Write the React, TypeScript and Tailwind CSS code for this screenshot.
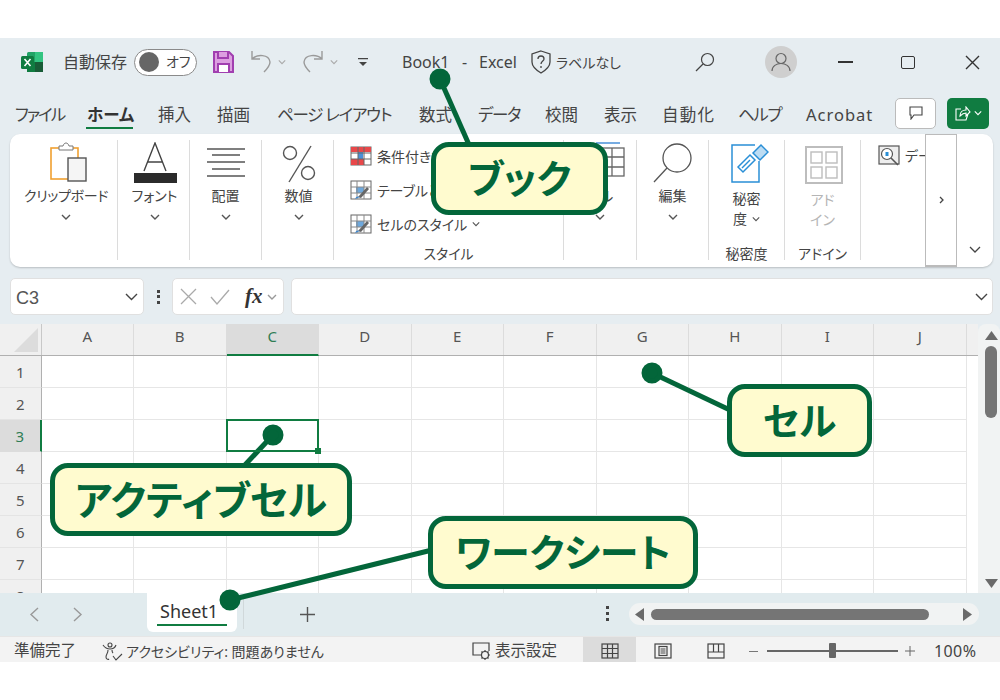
import React from 'react';

const COLS = ['A', 'B', 'C', 'D', 'E', 'F', 'G', 'H', 'I', 'J'];
const ROWS = [1, 2, 3, 4, 5, 6, 7, 8];

const TABS = [
  { label: 'ファイル', w: 'w-[72px] tracking-[-2px]' },
  { label: 'ホーム', w: 'w-[71px]', active: true },
  { label: '挿入', w: 'w-[59px]' },
  { label: '描画', w: 'w-[60px]' },
  { label: 'ページ レイアウト', w: 'w-[142px] tracking-[-1.2px]' },
  { label: '数式', w: 'w-[59px]' },
  { label: 'データ', w: 'w-[67px] tracking-[-1.3px]' },
  { label: '校閲', w: 'w-[59px]' },
  { label: '表示', w: 'w-[58px]' },
  { label: '自動化', w: 'w-[76px] tracking-[1.2px]' },
  { label: 'ヘルプ', w: 'w-[68px] tracking-[-1.3px]' },
  { label: 'Acrobat', w: 'w-[74px] tracking-[1px]' },
];

const Chevron = ({ className = '', color = '#555' }: { className?: string; color?: string }) => (
  <svg className={className} width="10" height="6" viewBox="0 0 10 6" fill="none" stroke={color} strokeWidth="1.4">
    <path d="M1 1l4 4 4-4" />
  </svg>
);

const Group = ({ className, label, children }: { className: string; label?: string; children: React.ReactNode }) => (
  <div className={`relative flex flex-col items-center h-[120px] mt-[6px] border-r border-[#dcdcdc] shrink-0 ${className}`}>
    {children}
    {label && <div className="absolute bottom-[-4px] left-0 right-0 text-center text-[14px] leading-[20px]">{label}</div>}
  </div>
);

const StyleIcon = () => (
  <svg width="22" height="20" viewBox="0 0 22 20" fill="none">
    <rect x="1" y="1" width="20" height="18" fill="#fff" stroke="#666" />
    <rect x="6" y="7" width="8" height="6" fill="#6ea8dc" />
    <path d="M1 7h20M1 13h20M7 1v18M14 1v18" stroke="#888" />
    <path d="M8 17l9-10 2 2-8 9z" fill="#666" />
    <path d="M5 19c1-3 3-3 5-2z" fill="#3a86d0" />
  </svg>
);

const Callout = ({ className, children }: { className: string; children: React.ReactNode }) => (
  <div className={`absolute h-[73px] flex items-center justify-center rounded-[18px] border-[5px] border-[#03663a] bg-[#fffbcf] text-[#03663a] font-bold whitespace-nowrap ${className}`}>
    {children}
  </div>
);

export default function App() {
  return (
    <div className="relative w-[1000px] h-[700px] bg-white overflow-hidden pt-[38px] text-[#444] font-['Noto_Sans','Noto_Sans_CJK_JP',sans-serif] [font-feature-settings:'palt']">
      <div className="h-[624px] flex flex-col bg-[#e6edf1]">
        {/* title bar */}
        <div className="h-[54px] pb-[6px] flex items-center shrink-0 text-[16px]">
          <svg className="ml-[21px]" width="22" height="22" viewBox="0 0 22 22">
            <rect x="6" y="1" width="16" height="20" rx="1.5" fill="#21a366" />
            <rect x="14" y="1" width="8" height="10" fill="#33c481" />
            <rect x="6" y="11" width="8" height="10" fill="#107c41" />
            <rect x="14" y="11" width="8" height="10" fill="#185c37" />
            <rect x="0" y="5" width="13" height="13" rx="1.5" fill="#107c41" />
            <path d="M3.5 8l6 7M9.5 8l-6 7" stroke="#fff" strokeWidth="1.6" />
          </svg>
          <span className="ml-[20px] w-[63px] whitespace-nowrap">自動保存</span>
          <div className="ml-[8px] w-[63px] h-[27px] rounded-full border border-[#8a8a8a] bg-white flex items-center">
            <div className="ml-[4px] w-[20px] h-[20px] rounded-full bg-[#666]" />
            <span className="ml-[7px] text-[14px] leading-none">オフ</span>
          </div>
          <svg className="ml-[16px]" width="21" height="22" viewBox="0 0 21 22" fill="#dc9fe0" stroke="#a13fb0" strokeWidth="2">
            <path d="M1 1h15l4 4v16H1z" />
            <path d="M5 1v6h10V1" />
            <path d="M5 21v-8h11v8" fill="#fff" />
          </svg>
          <svg className="ml-[16px]" width="22" height="24" viewBox="0 0 22 24" fill="none" stroke="#9a9a9a" strokeWidth="1.4">
            <path d="M2 1v8h8M2 9c5-5 17-5 18 3 0 4-3 7-6 10" />
          </svg>
          <Chevron className="ml-[6px] w-[8px]" color="#aaa" />
          <svg className="ml-[16px]" width="22" height="24" viewBox="0 0 22 24" fill="none" stroke="#9a9a9a" strokeWidth="1.4">
            <path d="M20 1v8h-8M20 9c-5-5-17-5-18 3 0 4 3 7 6 10" />
          </svg>
          <Chevron className="ml-[6px] w-[8px]" color="#aaa" />
          <svg className="ml-[20px]" width="10" height="10" viewBox="0 0 10 10" fill="#444">
            <path d="M0 1h10v1.3H0zM1 5h8L5 9z" />
          </svg>
          <span className="ml-[34px] w-[60px]">Book1</span>
          <span className="w-[17px]">-</span>
          <span className="w-[51px]">Excel</span>
          <svg width="22" height="24" viewBox="0 0 22 24" fill="none" stroke="#444" strokeWidth="1.3">
            <path d="M11 1l9 3v8c0 5-4 8-9 11-5-3-9-6-9-11V4z" />
            <path d="M8 9c0-4 6-4 6 0 0 2-3 2-3 5M11 16v2" />
          </svg>
          <span className="ml-[4px] w-[139px] text-[14px] whitespace-nowrap">ラベルなし</span>
          <svg width="20" height="20" viewBox="0 0 20 20" fill="none" stroke="#444" strokeWidth="1.2">
            <circle cx="12.5" cy="7.5" r="6" />
            <path d="M8 12l-7 7" />
          </svg>
          <div className="ml-[50px] w-[32px] h-[32px] rounded-full bg-[#cfcfcf] flex items-center justify-center">
            <svg width="20" height="20" viewBox="0 0 20 20" fill="none" stroke="#666" strokeWidth="1.2">
              <circle cx="10" cy="6.5" r="5" />
              <path d="M1 19c0-10 18-10 18 0" />
            </svg>
          </div>
          <div className="ml-[41px] w-[15px] h-[1.5px] bg-[#333]" />
          <div className="ml-[48px] w-[14px] h-[13px] rounded-[2px] border-[1.5px] border-[#333]" />
          <svg className="ml-[50px]" width="15" height="15" viewBox="0 0 15 15" stroke="#333" strokeWidth="1.4">
            <path d="M1 1l13 13M14 1L1 14" />
          </svg>
        </div>

        {/* ribbon tabs */}
        <div className="h-[42px] pt-[4px] flex items-center shrink-0 pl-[15px] text-[16.5px] relative">
          {TABS.map((t) => (
            <div key={t.label} className={`${t.w} shrink-0 whitespace-nowrap relative ${t.active ? 'font-bold text-[#333]' : ''}`}>
              {t.label}
              {t.active && <div className="absolute left-[-1px] top-[24px] w-[47px] h-[2.5px] bg-[#107c41]" />}
            </div>
          ))}
          <div className="ml-[15px] mb-[4px] w-[41px] h-[31px] rounded-[5px] border border-[#bbb] bg-white flex items-center justify-center shrink-0">
            <svg width="14" height="14" viewBox="0 0 14 14" fill="none" stroke="#444" strokeWidth="1.1">
              <path d="M1 1h12v8H5l-3 4V9H1z" />
            </svg>
          </div>
          <div className="ml-[11px] mb-[4px] w-[42px] h-[31px] rounded-[5px] bg-[#107c41] flex items-center justify-center gap-[3px] shrink-0">
            <svg width="16" height="15" viewBox="0 0 16 15" fill="none" stroke="#fff" strokeWidth="1.1">
              <path d="M6 3H1v11h10l2-6M5 10c0-4 3-6 6-6V1l4 5-4 4V7c-3 0-4 1-6 3z" />
            </svg>
            <Chevron className="w-[8px]" color="#fff" />
          </div>
        </div>

        {/* ribbon */}
        <div className="ml-[10px] w-[983px] h-[133px] shrink-0 flex bg-white rounded-[10px] shadow-[0_1px_2px_rgba(0,0,0,0.2)] text-[14px] relative overflow-hidden">
          <Group className="w-[108px] pl-[5px]">
            <svg className="mt-[2px] ml-[6px]" width="38" height="42" viewBox="0 0 38 42" fill="none">
              <rect x="1" y="6" width="27" height="31" fill="#fff" stroke="#f0a030" strokeWidth="1.6" />
              <path d="M9 8V4h4c1-4 5-4 6 0h4v4z" fill="#fff" stroke="#777" />
              <rect x="18" y="16" width="18" height="23" fill="#f5f5f5" stroke="#555" strokeWidth="1.4" />
            </svg>
            <span className="mt-[2px] leading-[20px] whitespace-nowrap tracking-[-0.3px]">クリップボード</span>
            <Chevron className="mt-[8px]" />
          </Group>
          <Group className="w-[72px] pl-[2px]">
            <svg className="mt-[2px]" width="44" height="42" viewBox="0 0 44 42" fill="none">
              <path d="M11 29L22 1l11 28M15 20h14" stroke="#444" strokeWidth="1.4" />
              <rect x="1" y="31" width="43" height="10" fill="#2b2b2b" />
            </svg>
            <span className="mt-[2px] leading-[20px]">フォント</span>
            <Chevron className="mt-[8px]" />
          </Group>
          <Group className="w-[72px]">
            <svg className="mt-[2px]" width="38" height="42" viewBox="0 0 38 42" stroke="#555" strokeWidth="1.3">
              <path d="M0 7h38M5 13h28M0 20h38M5 27h28M0 34h38" />
            </svg>
            <span className="mt-[2px] leading-[20px]">配置</span>
            <Chevron className="mt-[8px]" />
          </Group>
          <Group className="w-[72px] pl-[2px]">
            <svg className="mt-[2px]" width="34" height="42" viewBox="0 0 34 42" fill="none" stroke="#555" strokeWidth="1.4">
              <ellipse cx="8" cy="11" rx="6.5" ry="6.5" />
              <ellipse cx="26" cy="31" rx="6.5" ry="6.5" />
              <path d="M29 4L7 40" />
            </svg>
            <span className="mt-[2px] leading-[20px]">数値</span>
            <Chevron className="mt-[8px]" />
          </Group>
          <Group className="w-[230px] items-start pl-[16px]" label="スタイル">
            <div className="mt-[-1px] h-[34px] flex items-center gap-[5px] whitespace-nowrap">
              <svg width="22" height="20" viewBox="0 0 22 20" fill="none">
                <rect x="1" y="1" width="20" height="18" fill="#fff" stroke="#666" />
                <rect x="1" y="1" width="20" height="5" fill="#e8484a" />
                <rect x="8" y="6" width="5" height="7" fill="#4a90d9" />
                <rect x="1" y="13" width="13" height="6" fill="#e8484a" />
                <path d="M1 7h20M1 13h20M8 1v18M14 1v18" stroke="#666" />
              </svg>
              <span>条件付き書式</span>
            </div>
            <div className="h-[34px] flex items-center gap-[5px] whitespace-nowrap">
              <StyleIcon />
              <span>テーブルとして書式設定</span>
            </div>
            <div className="h-[34px] flex items-center gap-[5px] whitespace-nowrap">
              <StyleIcon />
              <span>セルのスタイル</span>
              <Chevron className="w-[8px]" />
            </div>
          </Group>
          <Group className="w-[73px]">
            <svg className="mt-[2px] ml-[24px]" width="32" height="36" viewBox="0 0 32 36" fill="none" stroke="#666" strokeWidth="1.3">
              <rect x="4" y="6" width="24" height="28" />
              <path d="M4 15h24M4 25h24M16 6v28" />
              <path d="M0 1h24" stroke="#4a90d9" />
            </svg>
            <span className="mt-[8px] leading-[20px]">セル</span>
            <Chevron className="mt-[8px]" />
          </Group>
          <Group className="w-[72px]">
            <svg className="mt-[3px]" width="40" height="40" viewBox="0 0 40 40" fill="none" stroke="#555" strokeWidth="1.3">
              <circle cx="24" cy="15" r="14" />
              <path d="M14 25L1 39" />
            </svg>
            <span className="mt-[3px] leading-[20px]">編集</span>
            <Chevron className="mt-[8px]" />
          </Group>
          <Group className="w-[76px]" label="秘密度">
            <svg className="mt-[3px] ml-[7px]" width="38" height="40" viewBox="0 0 38 40" fill="none" stroke="#2a8fd6" strokeWidth="1.5">
              <path d="M24 2H1v37h27V18" />
              <path d="M7 24l12-12 5 5-12 12z" />
              <path d="M11 25l8-8" />
              <path d="M22 10l8-8 7 7-8 8z" fill="#bcdcf3" />
            </svg>
            <span className="mt-[6px] leading-[20px]">秘密</span>
            <span className="leading-[20px] flex items-center gap-[5px]">度<Chevron className="w-[8px]" /></span>
          </Group>
          <Group className="w-[76px] text-[#b5b5b5]" label="">
            <svg className="mt-[6px] ml-[3px]" width="38" height="38" viewBox="0 0 38 38" fill="none" stroke="#bdbdbd" strokeWidth="2">
              <rect x="1" y="1" width="36" height="36" />
              <rect x="6" y="6" width="11" height="11" strokeWidth="1.4" />
              <rect x="21" y="6" width="11" height="11" strokeWidth="1.4" />
              <rect x="6" y="21" width="11" height="11" strokeWidth="1.4" />
              <rect x="21" y="21" width="11" height="11" strokeWidth="1.4" />
            </svg>
            <span className="mt-[6px] leading-[20px]">アド</span>
            <span className="leading-[20px]">イン</span>
            <div className="absolute bottom-[-4px] left-0 right-0 text-center leading-[20px] text-[#444]">アドイン</div>
          </Group>
          <div className="w-[64px] shrink-0 overflow-hidden pl-[17px] pt-[11px] flex items-start gap-[5px] whitespace-nowrap">
            <svg className="shrink-0" width="22" height="21" viewBox="0 0 22 21" fill="none" stroke="#555" strokeWidth="1.2">
              <rect x="1" y="1" width="20" height="18" fill="#eee" />
              <circle cx="9" cy="9" r="5.5" fill="#fff" />
              <rect x="7.5" y="7" width="3" height="4" fill="#2a8fd6" stroke="none" />
              <path d="M13 13l7 7" strokeWidth="1.6" />
            </svg>
            <span>データ分析</span>
          </div>
          <div className="w-[32px] shrink-0 border-x border-t border-b-2 border-[#bbb] flex items-center justify-center bg-white text-[13px]">
            <svg width="5" height="8" viewBox="0 0 5 8" fill="none" stroke="#444" strokeWidth="1.3">
              <path d="M1 1l3 3-3 3" />
            </svg>
          </div>
          <div className="flex-1 flex items-end justify-center pb-[14px]">
            <svg width="12" height="7" viewBox="0 0 12 7" fill="none" stroke="#444" strokeWidth="1.3">
              <path d="M1 1l5 5 5-5" />
            </svg>
          </div>
        </div>

        {/* formula bar */}
        <div className="mt-[11px] h-[37px] shrink-0 flex items-center">
          <div className="ml-[10px] w-[134px] h-full rounded-[5px] bg-white border border-[#e0e0e0] flex items-center justify-between pl-[5px] pr-[5px] text-[18px] text-[#555]">
            <span className="font-['Liberation_Sans',sans-serif] mt-[3px]">C3</span>
            <svg width="13" height="8" viewBox="0 0 13 8" fill="none" stroke="#444" strokeWidth="1.4">
              <path d="M1 1l5.500 5.500L12 1" />
            </svg>
          </div>
          <div className="w-[28px] flex flex-col items-center gap-[2.5px]">
            <div className="w-[3px] h-[3px] bg-[#444]" />
            <div className="w-[3px] h-[3px] bg-[#444]" />
            <div className="w-[3px] h-[3px] bg-[#444]" />
          </div>
          <div className="w-[112px] h-full rounded-[5px] bg-white border border-[#e0e0e0] flex items-center">
            <svg className="ml-[7px]" width="17" height="17" viewBox="0 0 17 17" stroke="#aaa" strokeWidth="1.3">
              <path d="M1 1l15 15M16 1L1 16" />
            </svg>
            <svg className="ml-[13px]" width="20" height="16" viewBox="0 0 20 16" fill="none" stroke="#aaa" strokeWidth="1.3">
              <path d="M1 8l6 7L19 1" />
            </svg>
            <span className="ml-[15px] w-[19px] text-[21px] leading-none font-bold italic text-[#333] font-['Liberation_Serif',serif]">fx</span>
            <Chevron className="ml-[2px] w-[12px]" color="#999" />
          </div>
          <div className="ml-[7px] w-[702px] h-full rounded-[5px] bg-white border border-[#e0e0e0] flex items-center justify-end pr-[4px]">
            <svg width="13" height="8" viewBox="0 0 13 8" fill="none" stroke="#444" strokeWidth="1.4">
              <path d="M1 1l5.500 5.500L12 1" />
            </svg>
          </div>
        </div>

        {/* sheet */}
        <div className="mt-[9px] flex-1 min-h-0 flex">
          <div className="w-[978px] shrink-0 bg-white overflow-hidden">
            <div className="h-[32px] flex bg-[#f0f0f0] border-b-[1.5px] border-[#b0b0b0] text-[15px] text-[#555]">
              <div className="w-[41.5px] shrink-0 border-r border-[#c8c8c8] flex items-end justify-end pb-[3px] pr-[3px]">
                <svg width="24" height="24" viewBox="0 0 24 24" fill="#dcdcdc">
                  <path d="M24 0v24H0z" />
                </svg>
              </div>
              {COLS.map((c) => (
                <div
                  key={c}
                  className={`w-[92.5px] shrink-0 border-r border-[#dcdcdc] flex items-center justify-center pb-[6px] ${c === 'C' ? 'bg-[#dcdcdc] text-[#2f7d55] border-b-2 border-b-[#107c41] h-[32px]' : ''}`}
                >
                  {c}
                </div>
              ))}
            </div>
            {ROWS.map((r) => (
              <div key={r} className="h-[32px] flex text-[15px]">
                <div className={`w-[41.5px] shrink-0 flex items-center justify-center pt-[2px] border-r border-b ${r === 3 ? 'bg-[#dcdcdc] text-[#2f7d55] border-r-[#107c41] border-r-2 border-b-[#dcdcdc]' : 'bg-[#f0f0f0] text-[#555] border-r-[#b0b0b0] border-b-[#e4e4e4]'}`}>
                  {r}
                </div>
                {COLS.map((c) => (
                  <div key={c} className="relative w-[92.5px] shrink-0 border-r border-b border-[#e6e6e6]">
                    {r === 3 && c === 'C' && (
                      <div className="absolute z-10 left-[-1px] top-[-1px] right-[-1px] bottom-[-1px] border-2 border-[#107c41]">
                        <div className="absolute right-[-4px] bottom-[-4px] w-[6px] h-[6px] bg-[#107c41]" />
                      </div>
                    )}
                  </div>
                ))}
              </div>
            ))}
          </div>
          {/* vertical scrollbar */}
          <div className="w-[22px] shrink-0 bg-[#f1f3f3] rounded-t-[8px] flex flex-col items-center pt-[7px] pl-[4px]">
            <svg width="13" height="9" viewBox="0 0 13 9" fill="#6a6a6a">
              <path d="M6.500 0L13 9H0z" />
            </svg>
            <div className="mt-[6px] w-[12px] h-[72px] rounded-full bg-[#757575]" />
            <svg className="mt-[161px]" width="13" height="9" viewBox="0 0 13 9" fill="#6a6a6a">
              <path d="M0 0h13L6.500 9z" />
            </svg>
          </div>
        </div>

        {/* sheet tabs */}
        <div className="h-[43px] shrink-0 flex bg-[#e1ebee] items-start">
          <svg className="ml-[29px] mt-[14px]" width="10" height="15" viewBox="0 0 10 15" fill="none" stroke="#999" strokeWidth="1.4">
            <path d="M9 1L2 7.500 9 14" />
          </svg>
          <svg className="ml-[34px] mt-[14px]" width="10" height="15" viewBox="0 0 10 15" fill="none" stroke="#999" strokeWidth="1.4">
            <path d="M1 1l7 6.500L1 14" />
          </svg>
          <div className="relative ml-[64px] w-[90px] h-[39px] rounded-b-[6px] bg-white text-[18px] pl-[13px] pt-[5px] leading-[26px] text-[#333]">
            Sheet1
            <div className="absolute left-[10px] bottom-[6px] w-[70px] h-[2.5px] bg-[#107c41]" />
          </div>
          <div className="ml-[6px] mt-[4px] w-px h-[32px] bg-[#d0d8da]" />
          <svg className="ml-[56px] mt-[14px]" width="15" height="15" viewBox="0 0 15 15" stroke="#555" strokeWidth="1.4">
            <path d="M7.500 0v15M0 7.500h15" />
          </svg>
          <div className="ml-[291px] mt-[13px] flex flex-col gap-[3px]">
            <div className="w-[3px] h-[3px] bg-[#444]" />
            <div className="w-[3px] h-[3px] bg-[#444]" />
            <div className="w-[3px] h-[3px] bg-[#444]" />
          </div>
          <div className="ml-[20px] mt-[10px] w-[350px] h-[22px] rounded-full bg-[#f1f3f3] flex items-center pl-[6px]">
            <svg width="9" height="13" viewBox="0 0 9 13" fill="#6a6a6a">
              <path d="M9 0v13L0 6.500z" />
            </svg>
            <div className="ml-[7px] w-[278px] h-[11px] rounded-full bg-[#757575]" />
            <svg className="ml-[34px]" width="9" height="13" viewBox="0 0 9 13" fill="#6a6a6a">
              <path d="M0 0v13l9-6.500z" />
            </svg>
          </div>
        </div>

        {/* status bar */}
        <div className="h-[26px] shrink-0 bg-[#f3f3f3] border-t border-[#e6e6e6] pt-[3px] flex items-center text-[14px] whitespace-nowrap">
          <span className="ml-[14px] w-[88px] text-[15.5px]">準備完了</span>
          <svg width="21" height="19" viewBox="0 0 21 19" fill="none" stroke="#444" strokeWidth="1.1">
            <circle cx="8" cy="3" r="2" />
            <path d="M1 3c2 3 4 4 7 4s5-1 6-4M6 8c0 4-2 4-2 7 0 2 2 3 3 2M10 8c0 1 0 2 1 3M11 14l3 4 6-6" />
          </svg>
          <span className="ml-[3px] w-[346px]">アクセシビリティ: 問題ありません</span>
          <svg width="20" height="18" viewBox="0 0 20 18" fill="none" stroke="#444" strokeWidth="1.2">
            <path d="M8 13H1V1h16v8" />
            <circle cx="13" cy="13" r="3.500" />
            <path d="M13 8v2M13 16v2M8 13h2M16 13h2M9.500 9.500l1 1M15.500 15.500l1 1M9.500 16.500l1-1M15.500 10.500l1-1" />
          </svg>
          <span className="ml-[3px] w-[88px] text-[15.5px]">表示設定</span>
          <div className="w-[53px] h-[25px] self-start mt-[-3px] bg-[#dcdcdc] flex items-center justify-center pt-[3px]">
            <svg width="18" height="16" viewBox="0 0 18 16" fill="none" stroke="#444" strokeWidth="1.2">
              <rect x="1" y="1" width="16" height="14" />
              <path d="M1 5.500h16M1 10.500h16M6.500 1v14M11.500 1v14" />
            </svg>
          </div>
          <svg className="ml-[18px]" width="18" height="16" viewBox="0 0 18 16" fill="none" stroke="#444" strokeWidth="1.2">
            <rect x="1" y="1" width="16" height="14" />
            <rect x="5" y="3.500" width="8" height="9" />
            <path d="M6.500 6h5M6.500 8h5M6.500 10h5" />
          </svg>
          <svg className="ml-[35px]" width="18" height="16" viewBox="0 0 18 16" fill="none" stroke="#444" strokeWidth="1.2">
            <rect x="1" y="1" width="16" height="14" />
            <path d="M1 9h16M6.500 1v8M11.500 1v8" />
          </svg>
          <div className="ml-[24px] w-[9px] h-px bg-[#777]" />
          <div className="relative ml-[9px] w-[131px] h-[1.5px] bg-[#666]">
            <div className="absolute left-[62px] top-[-7px] w-[7px] h-[15px] rounded-[1px] bg-[#666]" />
          </div>
          <svg className="ml-[7px]" width="10" height="10" viewBox="0 0 10 10" stroke="#666" strokeWidth="1">
            <path d="M5 0v10M0 5h10" />
          </svg>
          <span className="ml-[19px] text-[16px] tracking-[0.4px]">100%</span>
        </div>
      </div>

      {/* callouts */}
      <svg className="absolute left-0 top-0 pointer-events-none" width="1000" height="700" viewBox="0 0 1000 700" fill="#03663a" stroke="#03663a" strokeWidth="5">
        <path d="M440 79l30 68" />
        <path d="M652 373l80 38" />
        <path d="M273 435l-30 32" />
        <path d="M230 600l202-50" />
        <circle cx="440" cy="79" r="8" />
        <circle cx="652" cy="373" r="8" />
        <circle cx="273" cy="435" r="8" />
        <circle cx="230" cy="600" r="8" />
      </svg>
      <Callout className="left-[431px] top-[142px] w-[177px] text-[39px]">ブック</Callout>
      <Callout className="left-[727px] top-[384px] w-[145px] text-[38px]">セル</Callout>
      <Callout className="left-[50px] top-[463px] w-[302px] text-[40px]">アクティブセル</Callout>
      <Callout className="left-[428px] top-[516px] w-[270px] text-[39px]">ワークシート</Callout>
    </div>
  );
}
